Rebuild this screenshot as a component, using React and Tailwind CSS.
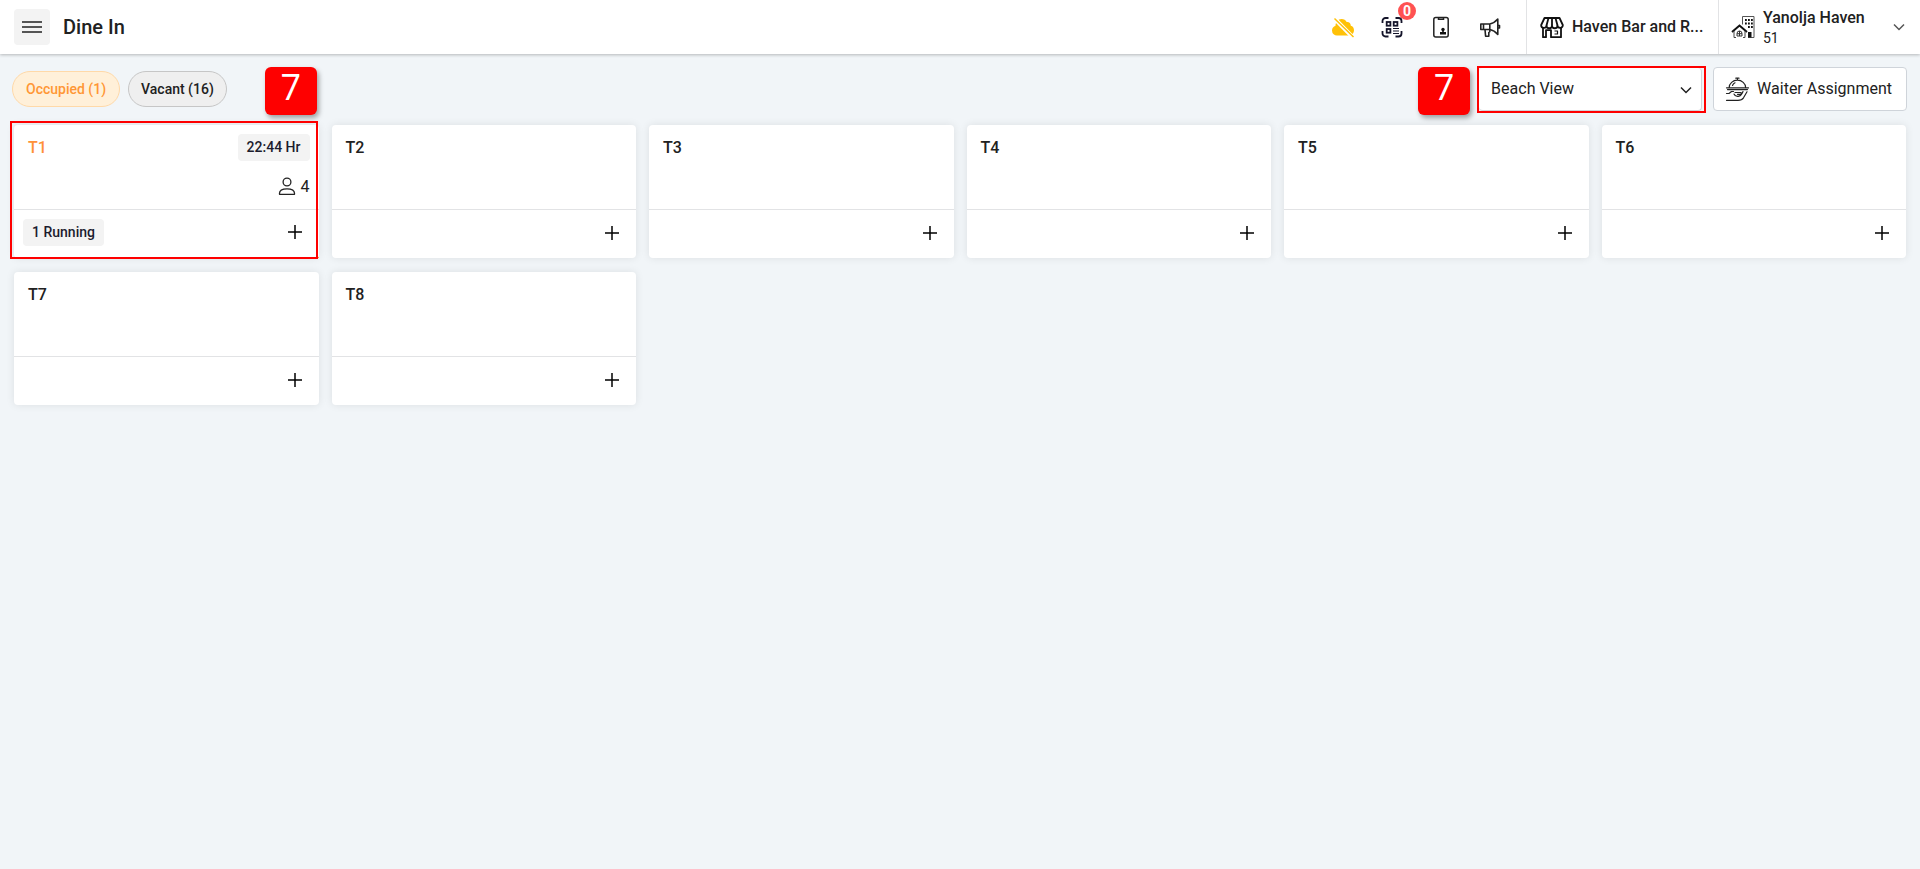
import React, { useState } from 'react';

const tables = [
  { name: 'T1', time: '22:44 Hr', guests: 4, running: 1 },
  { name: 'T2' },
  { name: 'T3' },
  { name: 'T4' },
  { name: 'T5' },
  { name: 'T6' },
  { name: 'T7' },
  { name: 'T8' },
];

const CloudOffIcon = () => (
  <svg className="w-6 h-6" viewBox="0 0 24 24" fill="#ffc107">
    <path d="M6.5 20.5a5 5 0 0 1-5.500-5c0-2.500 1.500-4 3.500-4.700C4.500 7 7 4 10.500 4c2.500 0 4.200 1.300 5.200 3 2.300-.4 4.100 1.200 4.100 3.800 2 .5 3.200 2.200 3.200 4.500 0 3-2.200 5.200-5 5.200z" />
    <path d="M2.500 2.500 22 22.500" stroke="#fff" strokeWidth="4" />
    <path d="M3.500 3.500 22.500 22" stroke="#ffc107" strokeWidth="1.500" />
  </svg>
);

const QrIcon = () => (
  <svg className="w-6 h-6" viewBox="0 0 24 24" fill="none" stroke="#14142a" strokeWidth="1.800">
    <path d="M2.500 8V6a3 3 0 0 1 3-3h3M15.500 3h3a3 3 0 0 1 3 3v2M21.500 16v2.500a3 3 0 0 1-3 3h-3M8.500 21.500h-3a3 3 0 0 1-3-3V16" />
    <rect x="6.700" y="7" width="3.700" height="3.700" />
    <rect x="13.700" y="7" width="3.700" height="3.700" />
    <rect x="6.700" y="14" width="3.700" height="3.700" />
    <path d="M13 13.500h6M13 16h6M13 18.500h6" strokeWidth="1.200" />
  </svg>
);

const PhoneIcon = () => (
  <svg className="w-6 h-6" viewBox="0 0 24 24" fill="none" stroke="#222" strokeWidth="1.500">
    <rect x="4.800" y="2.500" width="14.400" height="19.500" rx="2" />
    <path d="M9.500 3v1.200h5V3" />
    <circle cx="14" cy="14.500" r="1.700" fill="#111" stroke="none" />
    <path d="M13.200 15h1.600v2h2.200v2.500h-6V17h2.200z" fill="#111" stroke="none" />
  </svg>
);

const MegaphoneIcon = () => (
  <svg className="w-6 h-6" viewBox="0 0 24 24" fill="none" stroke="#222" strokeWidth="1.600" strokeLinejoin="round">
    <path d="M2.800 9h9v5.500h-9zM5.500 9v5.500M11.800 9c3.200-.6 5.700-2.300 8-5v15.500c-2.300-2.700-4.800-4.400-8-5" />
    <path d="M20 10.500h1.500v2.500H20M7 14.500l.6 6.800h3.200v-3.800l1-.8v-2.200" />
  </svg>
);

const StoreIcon = () => (
  <svg className="w-6 h-6 shrink-0" viewBox="0 0 24 24" fill="none" stroke="#111" strokeWidth="1.800" strokeLinejoin="round">
    <path d="M4.500 3h15L22.800 10a2.600 2.600 0 0 1-5.300.5 2.750 2.750 0 0 1-5.500 0 2.750 2.750 0 0 1-5.500 0A2.600 2.600 0 0 1 1.200 10z" />
    <path d="M8.500 3l-2 7.500M12 3v7.500M15.500 3l2 7.500" />
    <path d="M3 12.500v9.700h3v-7h5v7h10v-9.700" />
    <path d="M14.500 16h3v3h-3" strokeWidth="1.200" />
  </svg>
);

const HotelIcon = () => (
  <svg className="w-6 h-6 shrink-0" viewBox="0 0 24 24" fill="none" stroke="#111">
    <path d="M11.500 9.500v-8h11.500v21h-6" stroke="#555" />
    <path d="M14 4h1.800v2H14zM17 4h1.800v2H17zM20 4h1.800v2H20zM14 7.500h1.800v2H14zM17 7.500h1.800v2H17zM20 7.500h1.800v2H20zM17 11h1.800v2H17zM20 11h1.800v2H20zM17 17h3.500v5.500H17z" fill="#111" stroke="none" />
    <path d="M1 17l7.500-6.500L16 17" strokeWidth="2" />
    <path d="M3 16v6.500M14 16v6.500M3 22.500h2M12 22.500h2" stroke="#444" />
    <path d="M6 21v-2.500a2.500 2.500 0 0 1 5 0V21zM8.500 16v5M6 18.700h5" stroke="#333" />
  </svg>
);

const WaiterIcon = () => (
  <svg className="w-6 h-6 shrink-0" viewBox="0 0 24 24" fill="none" stroke="#222" strokeWidth="1.200" strokeLinecap="round" strokeLinejoin="round">
    <path d="M10.800 1.200h3.200M12.400 1.200v2M4.200 10.500a8.200 7.300 0 0 1 16.400 0M7.500 8.500a5.500 5 0 0 1 2.500-2.700" />
    <path d="M1.500 10.800h22M2.500 12.600h20" />
    <path d="M1.500 16.500h2.500l2.500-2h2M10 15.500h5.500c1.200.2 1 1.700 0 1.800h-3M9 17c.8 2 2.500 2.700 5 2.200 1.500-.5 3-2 4-4.700" />
    <path d="M1.500 23.300h11.500c3 0 4.500-1 5.500-2.500l3.500-6" />
  </svg>
);

const PersonIcon = () => (
  <svg className="w-5 h-5" viewBox="0 0 20 20" fill="none" stroke="#222" strokeWidth="1.300">
    <circle cx="10" cy="5" r="3.900" />
    <path d="M2.500 17.300v-1c0-3 3-4.500 7.500-4.500s7.500 1.500 7.500 4.500v1z" strokeLinejoin="round" />
  </svg>
);

const ChevronIcon = ({ className }) => (
  <svg className={className} viewBox="0 0 12 12" fill="none" stroke="currentColor" strokeWidth="1.500">
    <path d="M1 3.500l5 5 5-5" />
  </svg>
);

const StepMarker = ({ className }) => (
  <span className={`self-start w-[52px] h-12 mt-px rounded-md bg-[#fe0000] text-white text-4xl leading-10 text-center shadow-[2px_3px_5px_rgba(0,0,0,0.35)] font-['Open_Sans',sans-serif] ${className}`}>
    7
  </span>
);

const Tag = ({ children }) => (
  <span className="px-[9px] rounded bg-[#f3f3f3] text-sm leading-[27px] font-medium text-[#1c1c2e]">{children}</span>
);

const TableCard = ({ name, time, guests, running }) => {
  const occupied = Boolean(running);
  return (
    <article className="relative flex flex-col bg-white rounded shadow-[0_0_8px_rgba(0,0,0,0.09)]">
      <div className="flex justify-between h-[85px] pl-[14px] pr-[9px] pt-[9px] border-b border-[#e2e3e5]">
        <h2 className={`text-base leading-7 font-medium ${occupied ? 'text-[#ff9137]' : ''}`}>{name}</h2>
        {occupied && (
          <div className="flex flex-col items-end gap-3">
            <Tag>{time}</Tag>
            <span className="flex items-center gap-1 text-base leading-7"><PersonIcon />{guests}</span>
          </div>
        )}
      </div>
      <div className={`flex items-center h-12 pl-[9px] pr-3 pb-[3px] ${occupied ? 'border-b border-[#ff9735]' : ''}`}>
        {occupied && <Tag>{running} Running</Tag>}
        <button type="button" aria-label={`New order for ${name}`} className="ml-auto p-1">
          <svg className="w-4 h-4" viewBox="0 0 16 16" fill="none" stroke="#000" strokeWidth="1.500">
            <path d="M8 1v14M1 8h14" />
          </svg>
        </button>
      </div>
      {occupied && <span className="absolute -left-1 right-px -top-1 -bottom-px border-2 border-[#fe0000] pointer-events-none" />}
    </article>
  );
};

const App = () => {
  const [area, setArea] = useState('Beach View');

  return (
    <div className="min-h-screen bg-[#f1f5f8] text-[#212121] font-[Roboto,sans-serif]">
      <header className="relative flex items-center h-[54px] bg-white shadow-[0_1px_3px_rgba(0,0,0,0.25)]">
        <button type="button" aria-label="Menu" className="flex items-center justify-center w-9 h-9 ml-[14px] rounded bg-[#f3f3f3]">
          <svg className="w-5 h-5" viewBox="0 0 20 20" fill="none" stroke="#222" strokeWidth="1.300">
            <path d="M0 5h20M0 10h20M0 15h20" />
          </svg>
        </button>
        <h1 className="ml-[13px] text-xl font-medium">Dine In</h1>

        <div className="flex items-center gap-[25px] ml-auto pr-6">
          <button type="button" aria-label="Offline"><CloudOffIcon /></button>
          <button type="button" aria-label="QR orders" className="relative">
            <QrIcon />
            <span className="absolute left-[18px] -top-[13px] w-[18px] h-[18px] rounded-full bg-[#ff5252] text-white text-sm leading-[18px] font-bold">0</span>
          </button>
          <button type="button" aria-label="Mobile orders"><PhoneIcon /></button>
          <button type="button" aria-label="Announcements"><MegaphoneIcon /></button>
        </div>
        <button type="button" className="flex items-center gap-2 w-48 h-full pl-[13px] border-l border-[#e2e3e5] text-base font-medium whitespace-nowrap">
          <StoreIcon />
          Haven Bar and R...
        </button>
        <button type="button" className="flex items-center gap-2 w-[202px] h-full pl-3 pr-[15px] border-l border-[#e2e3e5] text-left">
          <HotelIcon />
          <span className="flex flex-col pt-px">
            <span className="text-base leading-5 font-medium">Yanolja Haven</span>
            <span className="text-sm leading-5">51</span>
          </span>
          <ChevronIcon className="w-3 h-3 ml-auto text-[#555]" />
        </button>
      </header>

      <main className="px-[14px] pt-3">
        <div className="flex items-center -ml-[2px] -mr-px h-[46px]">
          <button type="button" className="h-9 px-[13px] rounded-full border border-[#ffd9a8] bg-[#fff0d9] text-sm font-medium text-[#ff9735]">Occupied (1)</button>
          <button type="button" className="h-9 ml-2 px-3 rounded-full border border-[#c6c6c6] bg-[#efefef] text-sm font-medium">Vacant (16)</button>
          <StepMarker className="ml-[38px]" />

          <StepMarker className="ml-auto mr-[7px]" />
          <div className="relative w-[229px] h-[47px] border-2 border-[#fe0000]">
            <select
              aria-label="Area"
              value={area}
              onChange={(e) => setArea(e.target.value)}
              className="w-[223px] h-full pl-3 pr-9 rounded border-r border-b border-[#cfd4da] bg-white appearance-none text-base"
            >
              <option>Beach View</option>
            </select>
            <ChevronIcon className="absolute right-3 top-4 w-3 h-3 pointer-events-none" />
          </div>
          <button type="button" className="flex items-center gap-2 h-11 ml-[7px] pl-[11px] pr-[14px] rounded border border-[#cfd4da] bg-white text-base">
            <WaiterIcon />
            Waiter Assignment
          </button>
        </div>

        <section className="grid grid-cols-6 gap-x-[13px] gap-y-[14px] pt-[13px]">
          {tables.map((table) => (
            <TableCard key={table.name} {...table} />
          ))}
        </section>
      </main>
    </div>
  );
};

export default App;
